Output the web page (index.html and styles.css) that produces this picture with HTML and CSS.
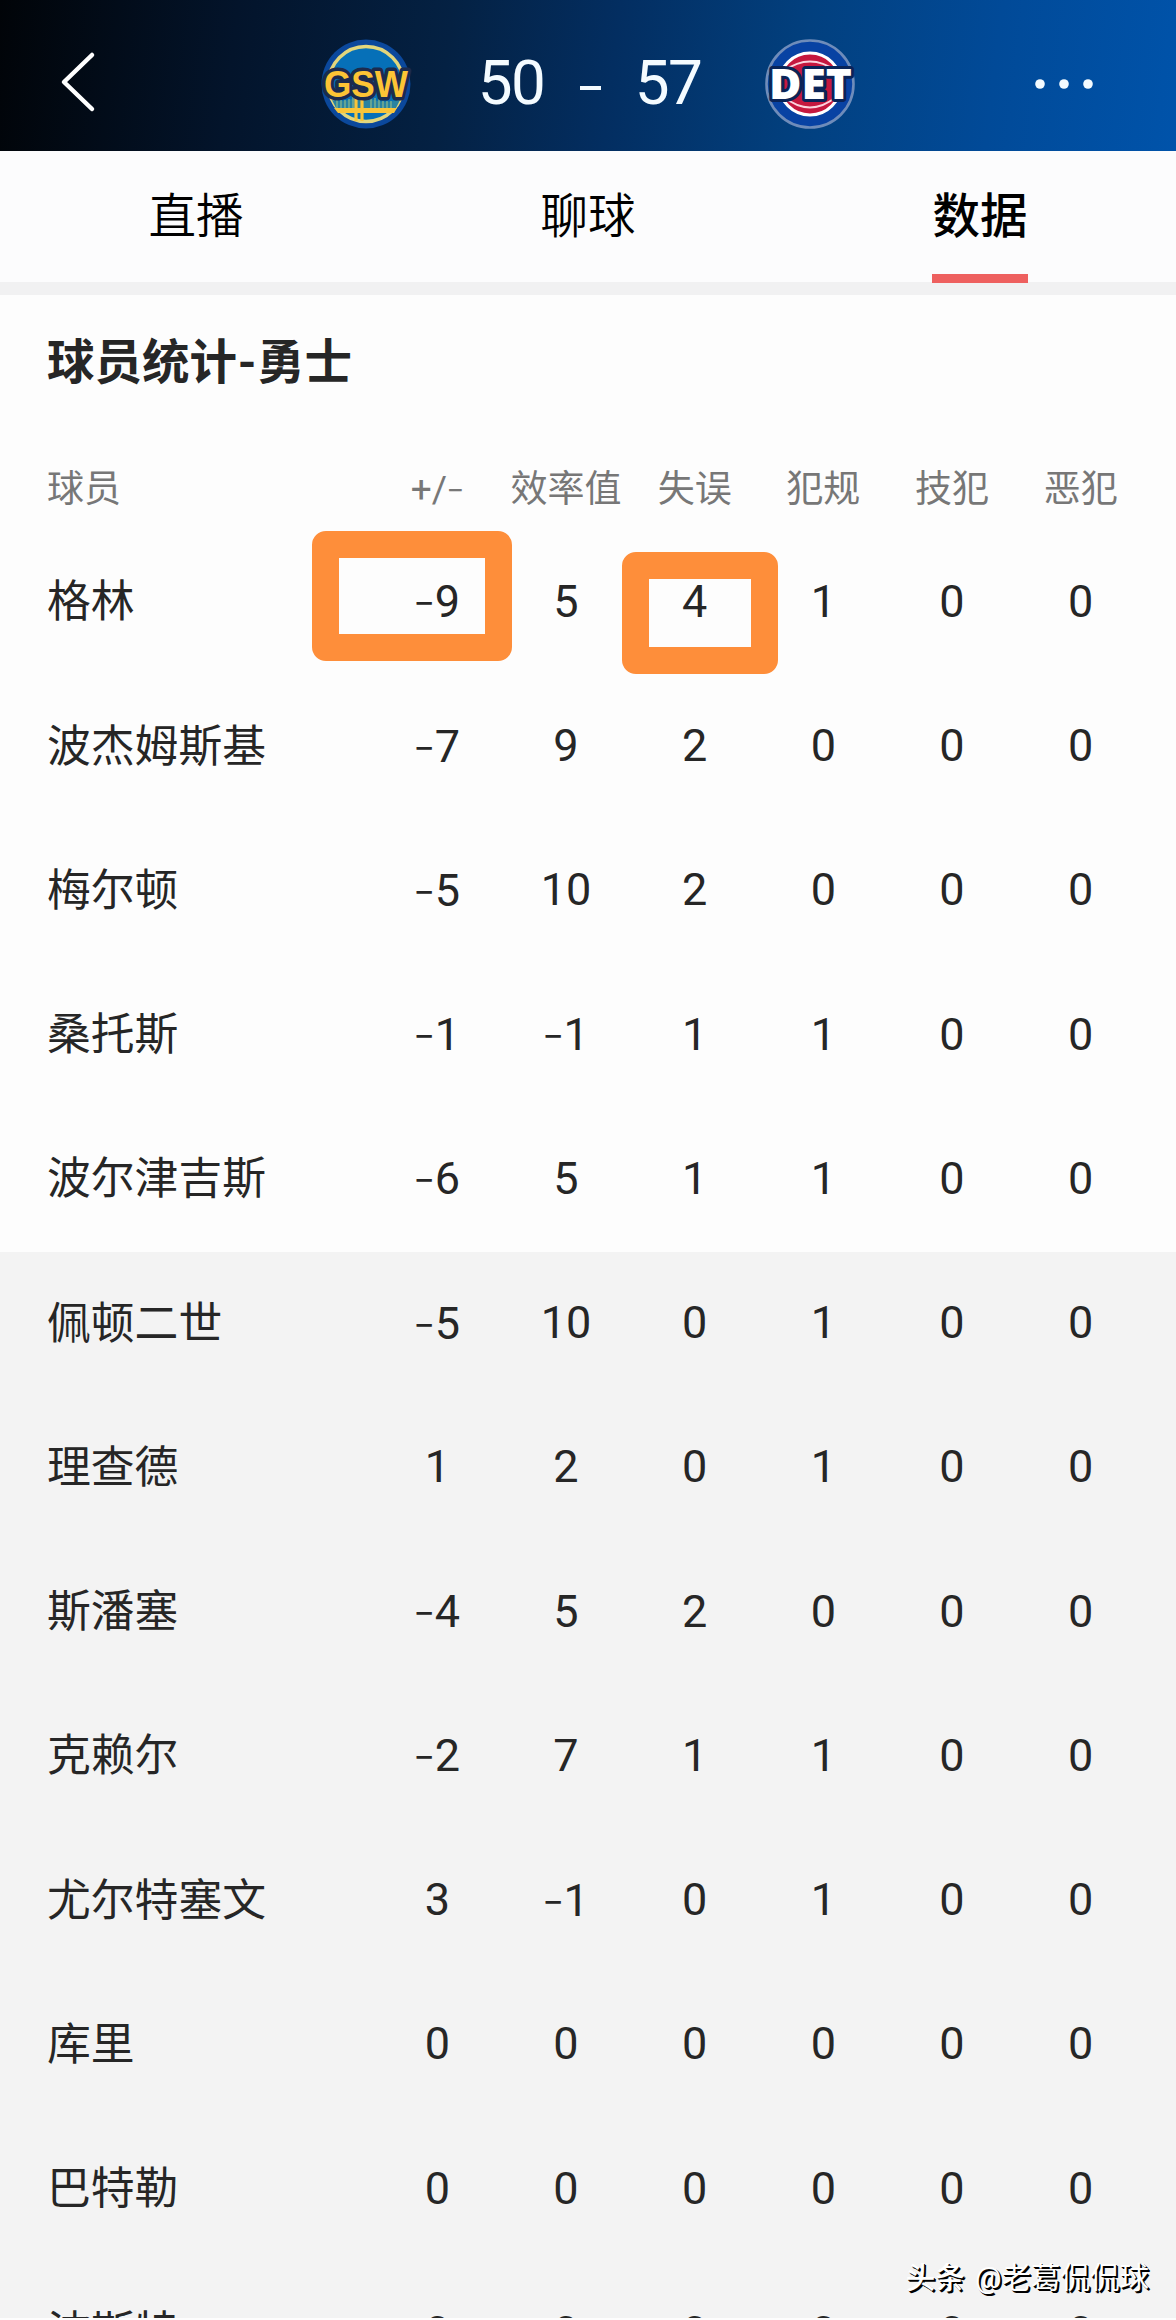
FILE: index.html
```html
<!doctype html>
<html lang="zh-CN">
<head>
<meta charset="utf-8">
<title>球员统计</title>
<link rel="stylesheet" href="styles.css">
</head>

<body>
<div id="page">
	<div class="header">
		<svg class="back" width="40" height="64" viewBox="0 0 40 64"><path d="M34 5L6 32L34 59" fill="none" stroke="#fff" stroke-width="4.5" stroke-linecap="round" stroke-linejoin="round"/></svg>
		<div class="match">
			<svg class="logo" width="92" height="92" viewBox="0 0 92 92">
				<circle cx="46" cy="46" r="44.5" fill="#0b489c"/>
				<circle cx="46" cy="46" r="37.5" fill="#0670b8" stroke="#e2d67c" stroke-width="3.4"/>
				<path d="M12 62Q30 66 42 54Q54 68 80 62L76 70H16Z" fill="#2a83a0"/>
				<path d="M17 60v10M21 62v8M25 62v8M29 61v9M33 59v11M51 58v12M55 60v10M59 61v9M63 63v7M67 63v7M71 63v7" stroke="#8db98a" stroke-width="1.2"/>
				<path d="M14 70H77L74 75H18Z" fill="#f9c53a"/>
				<path d="M36 57v26M42 57v26" stroke="#f9c53a" stroke-width="3.2"/>
				<text class="gsw" x="46" y="59" textLength="84" lengthAdjust="spacingAndGlyphs">GSW</text>
			</svg>
			<span class="score score1">50</span>
			<span class="line"></span>
			<span class="score score2">57</span>
			<svg class="logo" width="92" height="92" viewBox="0 0 92 92">
				<circle cx="46" cy="46" r="43.5" fill="#0842a3" stroke="#6f8cba" stroke-width="2.6"/>
				<circle cx="46" cy="46" r="31" fill="#c5183f" stroke="#fff" stroke-width="3"/>
				<path d="M20 33Q46 14 72 33M20 59Q46 80 72 59" fill="none" stroke="#fbd3dd" stroke-width="2"/>
				<text class="det" x="46.5" y="61" textLength="83" lengthAdjust="spacingAndGlyphs">DET</text>
			</svg>
		</div>
		<svg class="more" width="60" height="12" viewBox="0 0 60 12"><circle cx="6" cy="6" r="4.8"/><circle cx="30" cy="6" r="4.8"/><circle cx="54" cy="6" r="4.8"/></svg>
	</div>
	<div class="tabs">
		<span>直播</span>
		<span>聊球</span>
		<span class="active">数据</span>
	</div>
	<h2>球员统计<i>-</i>勇士</h2>
	<div class="table">
		<div class="row head"><b>球员</b><span>+/<i>-</i></span><span>效率值</span><span>失误</span><span>犯规</span><span>技犯</span><span>恶犯</span></div>
		<div class="row"><b>格林</b><span><em class="mark mark1"></em><i>-</i>9</span><span>5</span><span><em class="mark mark2"></em>4</span><span>1</span><span>0</span><span>0</span></div>
		<div class="row"><b>波杰姆斯基</b><span><i>-</i>7</span><span>9</span><span>2</span><span>0</span><span>0</span><span>0</span></div>
		<div class="row"><b>梅尔顿</b><span><i>-</i>5</span><span>10</span><span>2</span><span>0</span><span>0</span><span>0</span></div>
		<div class="row"><b>桑托斯</b><span><i>-</i>1</span><span><i>-</i>1</span><span>1</span><span>1</span><span>0</span><span>0</span></div>
		<div class="row"><b>波尔津吉斯</b><span><i>-</i>6</span><span>5</span><span>1</span><span>1</span><span>0</span><span>0</span></div>
		<div class="row bench"><b>佩顿二世</b><span><i>-</i>5</span><span>10</span><span>0</span><span>1</span><span>0</span><span>0</span></div>
		<div class="row bench"><b>理查德</b><span>1</span><span>2</span><span>0</span><span>1</span><span>0</span><span>0</span></div>
		<div class="row bench"><b>斯潘塞</b><span><i>-</i>4</span><span>5</span><span>2</span><span>0</span><span>0</span><span>0</span></div>
		<div class="row bench"><b>克赖尔</b><span><i>-</i>2</span><span>7</span><span>1</span><span>1</span><span>0</span><span>0</span></div>
		<div class="row bench"><b>尤尔特塞文</b><span>3</span><span><i>-</i>1</span><span>0</span><span>1</span><span>0</span><span>0</span></div>
		<div class="row bench"><b>库里</b><span>0</span><span>0</span><span>0</span><span>0</span><span>0</span><span>0</span></div>
		<div class="row bench"><b>巴特勒</b><span>0</span><span>0</span><span>0</span><span>0</span><span>0</span><span>0</span></div>
		<div class="row bench"><b>波斯特</b><span>0</span><span>0</span><span>0</span><span>0</span><span>0</span><span>0</span></div>
	</div>
	<div class="author"><b>头条</b> @老葛侃侃球</div>
</div>
</body>
</html>
```
FILE: styles.css
```css
* { margin:0; padding:0; box-sizing:border-box;}
body{ background:#fdfdfd; font-family:Roboto,"Noto Sans CJK SC",sans-serif; color:#262626;}
i,em{ font-style:normal;}
#page{ width:1176px; height:2318px; position:relative; overflow:hidden;}

.header{ height:151px; padding:17px 82px 0 58px; display:flex; align-items:center; background:linear-gradient(97deg,#010408 0%,#03142b 20%,#042143 38%,#032e61 52%,#02407f 68%,#014a98 84%,#0053aa 100%);}
.back{ display:block; margin-bottom:4px;}
.match{ margin-left:222px; display:flex; align-items:center;}
.logo{ display:block; overflow:visible;}
.score{ width:70px; margin-bottom:2px; font-size:62px; line-height:72px; font-weight:400; color:#f4fbff; text-align:center; letter-spacing:-1.5px;}
.score1{ margin-left:64px;}
.score2{ margin-right:61px;}
.line{ width:21px; height:4px; margin:7px 32px 0 34px; background:#f4fbff;}
.more{ margin-left:auto; fill:#f4fbff;}
.gsw,.det{ font-family:"Liberation Sans",sans-serif; font-weight:bold; text-anchor:middle; paint-order:stroke; stroke-linejoin:round;}
.gsw{ font-size:37px; fill:#fdc435; stroke:#1c2b4e; stroke-width:7px;}
.det{ font-family:"Open Sans",sans-serif; font-weight:800; font-size:42px; fill:#fff; stroke:#0a2458; stroke-width:6px;}

.tabs{ height:144px; display:flex; border-bottom:13px solid #f1f1f2; background:#fcfcfd;}
.tabs span{ flex:1; display:flex; justify-content:center; font-size:47.5px; line-height:132px; color:#000; font-weight:350;}
.tabs .active{ font-weight:500;}
.tabs .active:after{ content:""; width:96px; height:9px; margin:123px 0 0 -96px; background:#ee605f;}

h2{ height:136px; padding:0 47px; font-size:47.5px; line-height:137px; font-weight:700; color:#262626;}
h2 i{ display:inline-block; width:20px; text-align:center;}

.row{ height:144.25px; padding:0 31px 2px 47px; display:grid; grid-template-columns:326px repeat(6,1fr); align-items:center; font-size:45px; line-height:60px;}
.row b{ padding-top:1px; font-size:43.8px; font-weight:400;}
.row span{ position:relative; text-align:center; white-space:nowrap;}
.row i{ display:inline-block; font-family:Inter,sans-serif; font-weight:350; transform:scaleX(1.12);}
.head{ height:99.75px; padding-top:18px; padding-bottom:0; color:#777;}
.head b,.head span{ padding-top:0; font-size:37px;}
.bench{ background:#f3f3f3;}

/* 标注框 */
.mark{ position:absolute; border:27px solid #fe8e3a; border-radius:14px;}
.mark1{ left:-61px; top:-40px; width:200px; height:130px;}
.mark2{ left:-8px; top:-20px; width:156px; height:122px;}
.author{ position:absolute; right:27px; bottom:18px; font-size:29.5px; line-height:44px; color:#fff; text-shadow:1px 1px 0 #000,2px 2px 0 #000; word-spacing:3px;}
.author b{ font-weight:500;}
```
